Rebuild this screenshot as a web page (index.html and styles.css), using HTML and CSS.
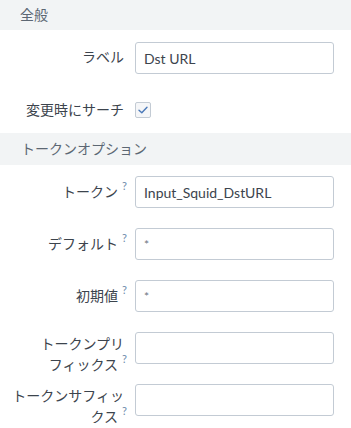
FILE: index.html
```html
<!DOCTYPE html>
<html lang="ja">
<head>
<meta charset="utf-8">
<link rel="stylesheet" href="styles.css">
</head>
<body>
<div class="panel">
  <section class="section section--first">
    <div class="section-head">全般</div>
    <div class="section-body">
      <div class="row">
        <label class="label">ラベル</label>
        <div class="control"><input class="input" type="text" value="Dst URL"></div>
      </div>
      <div class="row">
        <label class="label">変更時にサーチ</label>
        <div class="control">
          <span class="checkbox">
            <svg width="10" height="8" viewBox="0 0 10 8"><polyline points="1,4.2 3.8,6.8 9,1.2" fill="none" stroke="#4b79b8" stroke-width="1.4" stroke-linecap="round" stroke-linejoin="round"/></svg>
          </span>
        </div>
      </div>
    </div>
  </section>
  <section class="section">
    <div class="section-head">トークンオプション</div>
    <div class="section-body">
      <div class="row">
        <label class="label">トークン<span class="help">?</span></label>
        <div class="control"><input class="input" type="text" value="Input_Squid_DstURL"></div>
      </div>
      <div class="row">
        <label class="label">デフォルト<span class="help">?</span></label>
        <div class="control"><input class="input input--small" type="text" value="*"></div>
      </div>
      <div class="row">
        <label class="label">初期値<span class="help">?</span></label>
        <div class="control"><input class="input input--small" type="text" value="*"></div>
      </div>
      <div class="row">
        <label class="label label--wrap">トークンプリフィックス<span class="help">?</span></label>
        <div class="control"><input class="input" type="text" value=""></div>
      </div>
      <div class="row">
        <label class="label label--wrap">トークンサフィックス<span class="help">?</span></label>
        <div class="control"><input class="input" type="text" value=""></div>
      </div>
    </div>
  </section>
</div>
</body>
</html>
```
FILE: styles.css
```css
html, body {
  margin: 0;
  padding: 0;
  background: #ffffff;
}
body {
  font-family: "Lato", "Noto Sans CJK JP", sans-serif;
  font-size: 14px;
  color: #3c444d;
}
.panel {
  width: 351px;
}
.section-head {
  height: 32px;
  line-height: 32px;
  background: #f2f4f5;
  color: #5c6773;
  padding-left: 21px;
  font-size: 14px;
}
.section--first .section-head {
  height: 30px;
  line-height: 30px;
  padding-left: 20px;
}
.section-body {
  display: flex;
  flex-direction: column;
  gap: 20px;
  padding: 11px 0 7px;
}
.section--first .section-body {
  padding-top: 12px;
}
.row {
  display: flex;
  align-items: flex-start;
  gap: 11px;
  height: 32px;
}
.label {
  box-sizing: border-box;
  width: 124px;
  padding-left: 10px;
  padding-top: 5px;
  line-height: 20px;
  text-align: right;
  color: #3c444d;
  line-break: strict;
}
.label--wrap {
  padding-top: 2px;
}
.row:has(.checkbox) .label {
  padding-top: 6px;
}
.help {
  display: inline-block;
  font-size: 11px;
  line-height: 10px;
  vertical-align: 7px;
  margin-left: 4px;
  margin-right: -3px;
  color: #6d8cab;
  font-family: "Lato", sans-serif;
}
.control {
  flex: none;
  width: 199px;
  height: 32px;
  display: flex;
  align-items: center;
}
.input {
  box-sizing: border-box;
  width: 199px;
  height: 32px;
  border: 1px solid #c3cbd4;
  border-radius: 3px;
  background: #ffffff;
  padding: 0 8px;
  font-family: "Lato", "Noto Sans CJK JP", sans-serif;
  font-size: 14px;
  color: #3c444d;
  outline: none;
}
.input--small {
  font-size: 12px;
  color: #6b7480;
}
.checkbox {
  box-sizing: border-box;
  width: 16px;
  height: 16px;
  border: 1px solid #c3cbd4;
  border-radius: 2px;
  background: #f5f6f8;
  display: flex;
  align-items: center;
  justify-content: center;
}
.checkbox svg {
  display: block;
}
```
